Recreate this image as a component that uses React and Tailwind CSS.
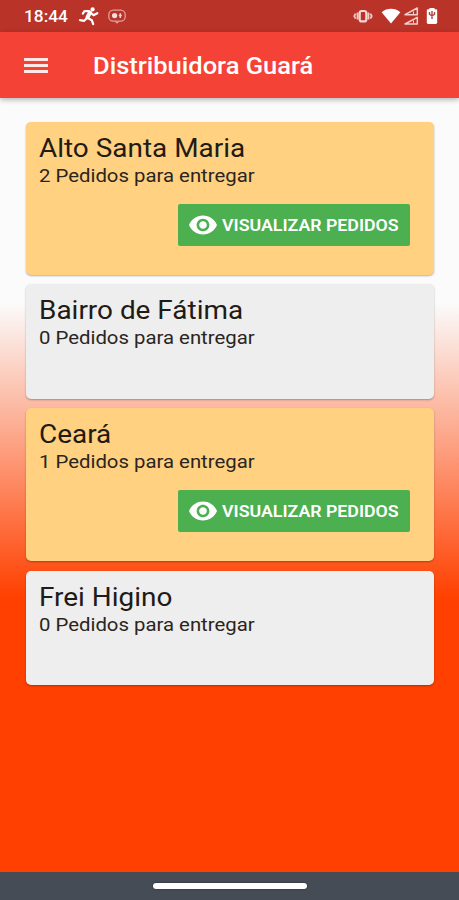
import React from "react";

function StatusBar() {
  return (
    <div className="flex h-8 shrink-0 items-center bg-[#b93329] pl-[24px] pr-[21px] text-white">
      <span className="w-[46px] origin-left scale-x-[1.05] pt-[1px] text-[16.5px] font-medium leading-8 whitespace-nowrap">18:44</span>
      <svg className="ml-[8px] h-[20px] w-[22px]" viewBox="0 0 22 20" fill="none" stroke="#fff" strokeLinecap="round" strokeLinejoin="round">
        <circle cx="14.6" cy="3.4" r="2.1" fill="#fff" stroke="none" />
        <path d="M12 6.5 9.5 11.2" strokeWidth="4" />
        <path d="M11 5.2 6.5 5 4.8 7.6M13 7l2.5 2.2 3.8-2M9.5 11.8l4.3 2.4 1.4 4M8.5 12.5 6.2 14.8 2 14.2" strokeWidth="2.2" />
      </svg>
      <svg className="ml-[8px] h-[16px] w-[18px]" viewBox="0 0 18 16" fill="none" stroke="#e0a09a">
        <rect x="0.8" y="2.2" width="16.4" height="11" rx="4.5" strokeWidth="1.3" />
        <circle cx="6.6" cy="7.6" r="2.6" fill="#f8dfdc" stroke="none" />
        <path d="M12.3 5.2v4.8M10.8 7.6h3" strokeWidth="1.5" stroke="#f3cfcb" />
        <path d="M7.5 13.5 9 15l1.5-1.5" strokeWidth="1.2" />
      </svg>
      <svg className="ml-auto h-[16px] w-[20px]" viewBox="0 0 20 16" fill="none" stroke="#f2c8c4">
        <rect x="6.7" y="3" width="6.6" height="10.4" rx="2" strokeWidth="2.2" stroke="#f6d6d3" />
        <path d="M4.6 4.6v7M15.4 4.6v7" strokeWidth="2" />
        <path d="M2.6 5.6 1.2 8.1l1.4 2.5M17.4 5.6l1.4 2.5-1.4 2.5" strokeWidth="1.8" strokeLinejoin="round" />
      </svg>
      <svg className="ml-[8px] h-[16px] w-[20px]" viewBox="0 0 20 16" fill="#fff">
        <path d="M.6 4.2C6-.3 14-.3 19.4 4.2L10 15.6Z" />
      </svg>
      <svg className="ml-[2px] h-[20px] w-[16px]" viewBox="0 0 16 20" fill="none" stroke="#f4cfcb" strokeWidth="1.5" strokeLinejoin="round">
        <path d="M2 8.7 14.3 2v6.7ZM2 18 14.3 11.3V18Z" />
        <path d="M10.5 5.5v3M10.5 14.5v3" strokeWidth="1" />
      </svg>
      <svg className="ml-[7px] h-[18px] w-[12px]" viewBox="0 0 12 18">
        <path d="M3.5 2.2V1h5v1.2h1.3c.8 0 1.4.6 1.4 1.4v12c0 .8-.6 1.4-1.4 1.4H2.2c-.8 0-1.4-.6-1.4-1.4v-12c0-.8.6-1.4 1.4-1.4Z" fill="#fff" />
        <path d="M3.5 5v2.2L6 9l2.5-1.8V5M6 4v8" fill="none" stroke="#a9443e" strokeWidth="1.4" />
      </svg>
    </div>
  );
}

function AppBar() {
  return (
    <header className="relative flex h-[66px] shrink-0 items-center bg-[#f44336] pl-[24px] shadow-[0_2px_5px_rgba(0,0,0,0.28)]">
      <div className="flex w-6 flex-col gap-[3px]">
        <span className="h-[3px] bg-[#ffe9e6]" />
        <span className="h-[3px] bg-[#ffe9e6]" />
        <span className="h-[3px] bg-[#ffe9e6]" />
      </div>
      <h1 className="ml-[44.5px] mt-[3px] origin-left scale-x-[1.085] text-[23.5px] font-medium leading-none whitespace-nowrap text-white">
        Distribuidora Guará
      </h1>
    </header>
  );
}

function ViewOrdersButton() {
  return (
    <button className="mt-[16px] mr-[24px] flex h-[42px] w-[232.5px] items-center self-end rounded-[2px] bg-[#4caf50] pl-[11px] text-white">
      <svg className="h-[28px] w-[28px] shrink-0" viewBox="1 1 22 22" fill="#fff">
        <path d="M12 4.5C7 4.5 2.73 7.61 1 12c1.73 4.39 6 7.5 11 7.5s9.27-3.11 11-7.5c-1.73-4.39-6-7.5-11-7.5zM12 17c-2.76 0-5-2.24-5-5s2.24-5 5-5 5 2.24 5 5-2.24 5-5 5zm0-8c-1.66 0-3 1.34-3 3s1.34 3 3 3 3-1.34 3-3-1.34-3-3-3z" />
      </svg>
      <span className="ml-[5.5px] mt-[1px] origin-left scale-x-[1.045] text-[17px] font-semibold leading-none whitespace-nowrap">VISUALIZAR PEDIDOS</span>
    </button>
  );
}

function DistrictCard({ name, orders }) {
  const active = orders > 0;
  return (
    <section
      className={`flex flex-col items-start rounded-[5px] pl-[13px] pt-[11px] shadow-[0_1px_2px_rgba(0,0,0,0.3)] ${
        active ? "h-[152.8px] bg-[#ffd180]" : "h-[114.4px] bg-[#eeeeee]"
      }`}
    >
      <h2 className="origin-left scale-x-[1.095] text-[25.5px] leading-[30px] whitespace-nowrap text-[#1f1b17]">{name}</h2>
      <p className="origin-left scale-x-[1.13] text-[18px] leading-[25px] whitespace-nowrap text-[#2a2520]">{orders} Pedidos para entregar</p>
      {active && <ViewOrdersButton />}
    </section>
  );
}

const districts = [
  { name: "Alto Santa Maria", orders: 2 },
  { name: "Bairro de Fátima", orders: 0 },
  { name: "Ceará", orders: 1 },
  { name: "Frei Higino", orders: 0 },
];

export default function App() {
  return (
    <div className="flex h-[900px] w-[459px] flex-col overflow-hidden bg-[#fafafa] font-[Roboto,sans-serif]">
      <StatusBar />
      <AppBar />
      <main className="flex flex-1 flex-col gap-[9.6px] bg-[linear-gradient(to_bottom,#fbfbfb_0px,#fbfbfb_205px,#ff4000_500px)] pl-[26px] pr-[25px] pt-[24px]">
        {districts.map((d) => (
          <DistrictCard key={d.name} name={d.name} orders={d.orders} />
        ))}
      </main>
      <footer className="flex h-[28px] shrink-0 justify-center bg-[#454c55] pt-[11px]">
        <div className="h-[6px] w-[154px] rounded-full bg-white shadow-[0_0_2px_rgba(0,0,0,0.5)]" />
      </footer>
    </div>
  );
}
